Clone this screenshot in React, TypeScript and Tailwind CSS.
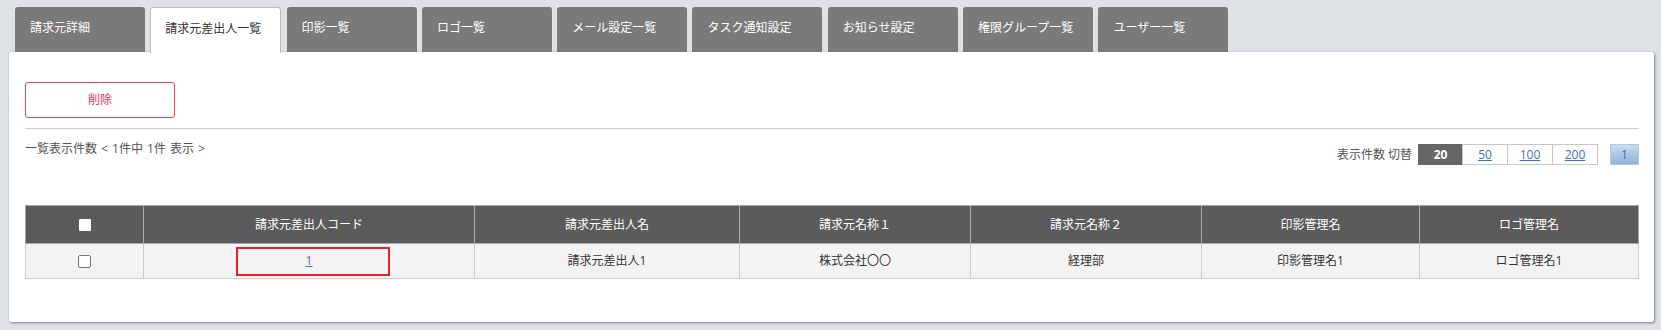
import React from 'react'

const tabs = [
  '請求元詳細',
  '請求元差出人一覧',
  '印影一覧',
  'ロゴ一覧',
  'メール設定一覧',
  'タスク通知設定',
  'お知らせ設定',
  '権限グループ一覧',
  'ユーザー一覧',
]

const columns = [
  { label: '', width: 118 },
  { label: '請求元差出人コード', width: 331 },
  { label: '請求元差出人名', width: 265 },
  { label: '請求元名称１', width: 231 },
  { label: '請求元名称２', width: 231 },
  { label: '印影管理名', width: 218 },
  { label: 'ロゴ管理名', width: 219 },
]

const pageSizes = ['20', '50', '100', '200']

function Tab({ label, active }: { label: string; active: boolean }) {
  if (active) {
    return (
      <div className="relative z-10 -mb-px flex h-[46px] w-[131px] items-center rounded-t-[3px] border border-b-0 border-[#b9bcc0] bg-white pb-[3px] pl-[14px] text-[#333]">
        {label}
      </div>
    )
  }
  return (
    <div className="flex h-[45px] w-[130px] items-center rounded-t-[3px] bg-[#7a7a7a] pb-[3px] pl-[15px] text-white">
      {label}
    </div>
  )
}

export default function App() {
  return (
    <div
      className="h-[330px] w-[1661px] overflow-hidden bg-[#dfe2e5] pt-[7px] text-[12px]"
      style={{ fontFamily: '"Open Sans", "Noto Sans CJK JP", sans-serif' }}
    >
      {/* tab strip */}
      <div className="ml-[15px] flex items-end gap-[5.3px]">
        {tabs.map((t, i) => (
          <Tab key={t} label={t} active={i === 1} />
        ))}
      </div>

      {/* panel */}
      <div className="ml-[9px] mr-[7px] h-[270px] rounded-[3px] bg-white pl-[16px] pr-[15px] pt-[30px] shadow-[1px_1px_3px_rgba(0,0,0,0.45)]">
        <button className="flex h-[36px] w-[150px] items-center justify-center rounded-[3px] border border-[#f2444f] bg-white text-[#f0364a]">
          削除
        </button>

        <div className="mt-[10px] h-px bg-[#cccccc]" />

        <div className="flex items-start justify-between">
          <div className="mt-[11px] text-[#555] [word-spacing:1px]">一覧表示件数 &lt; 1件中 1件 表示 &gt;</div>
          <div className="mt-[15px] flex items-center">
            <span className="mr-[6px] text-[#555]">表示件数 切替</span>
            {pageSizes.map((s, i) =>
              i === 0 ? (
                <span
                  key={s}
                  className="flex h-[21px] w-[45px] items-center justify-center border border-[#666] bg-[#666] font-bold text-white"
                >
                  {s}
                </span>
              ) : (
                <span
                  key={s}
                  className="-ml-px flex h-[21px] w-[46px] items-center justify-center border border-[#c8c8c8] bg-white text-[#3b6fc0] underline"
                >
                  {s}
                </span>
              ),
            )}
            <span className="ml-[12px] flex h-[21px] w-[29px] items-center justify-center border border-[#b5c8da] bg-gradient-to-b from-[#c9def0] to-[#8fb3d6] text-[#3b6fbd]">
              1
            </span>
          </div>
        </div>

        <table className="mt-[40px] w-[1613px] table-fixed border-collapse">
          <colgroup>
            {columns.map((c, i) => (
              <col key={i} style={{ width: c.width }} />
            ))}
          </colgroup>
          <thead>
            <tr className="h-[38px] bg-[#5b5b5b] text-white">
              {columns.map((c, i) => (
                <th key={i} className="border border-[#a9a9a9] p-0 text-center font-normal">
                  {i === 0 ? (
                    <span className="inline-block h-[12px] w-[12px] rounded-[1px] bg-white align-middle" />
                  ) : (
                    c.label
                  )}
                </th>
              ))}
            </tr>
          </thead>
          <tbody>
            <tr className="h-[35px] bg-[#f3f3f3] text-[#333]">
              <td className="border border-[#cccccc] p-0 text-center">
                <span className="inline-block h-[13px] w-[13px] rounded-[2px] border border-[#767676] bg-white align-middle" />
              </td>
              <td className="relative border border-[#cccccc] p-0 text-center">
                <span className="text-[#3b6fc0] underline">1</span>
                <span className="pointer-events-none absolute left-[92px] top-[3px] h-[29px] w-[154px] border-2 border-[#e8202a]" />
              </td>
              <td className="border border-[#cccccc] p-0 text-center">請求元差出人1</td>
              <td className="border border-[#cccccc] p-0 text-center">株式会社〇〇</td>
              <td className="border border-[#cccccc] p-0 text-center">経理部</td>
              <td className="border border-[#cccccc] p-0 text-center">印影管理名1</td>
              <td className="border border-[#cccccc] p-0 text-center">ロゴ管理名1</td>
            </tr>
          </tbody>
        </table>
      </div>
    </div>
  )
}
